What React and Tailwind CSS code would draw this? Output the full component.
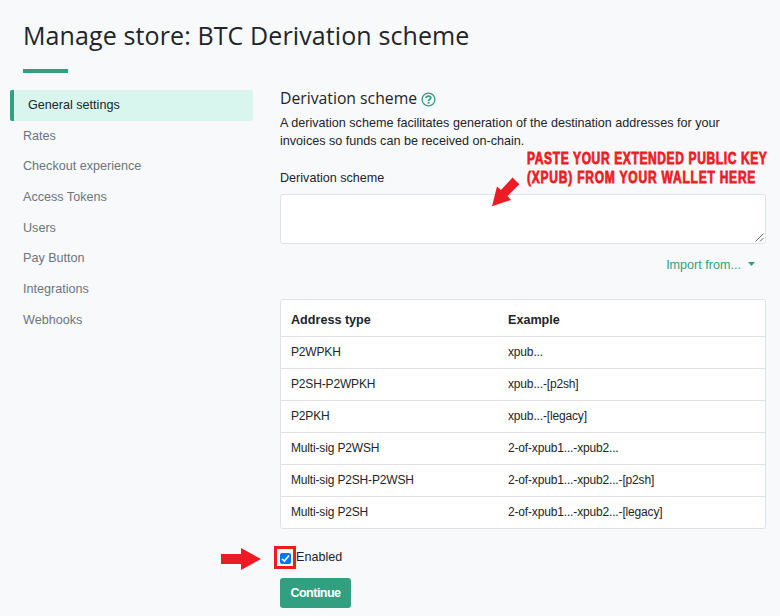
const navItems = [
  'Rates',
  'Checkout experience',
  'Access Tokens',
  'Users',
  'Pay Button',
  'Integrations',
  'Webhooks',
];

const addressTypes = [
  ['P2WPKH', 'xpub...'],
  ['P2SH-P2WPKH', 'xpub...-[p2sh]'],
  ['P2PKH', 'xpub...-[legacy]'],
  ['Multi-sig P2WSH', '2-of-xpub1...-xpub2...'],
  ['Multi-sig P2SH-P2WSH', '2-of-xpub1...-xpub2...-[p2sh]'],
  ['Multi-sig P2SH', '2-of-xpub1...-xpub2...-[legacy]'],
];

function Sidebar() {
  return (
    <nav className="flex w-[243px] shrink-0 flex-col text-[12.6px] text-[#6c757d]">
      <a className="flex h-[31px] items-center rounded-[2px] border-l-4 border-[#329f80] bg-[#d9f6ee] pb-px pl-[14px] text-[#212529]">
        General settings
      </a>
      {navItems.map((label) => (
        <a key={label} className="flex h-[30.65px] items-center pb-[0.4px] pl-[13px]">
          {label}
        </a>
      ))}
    </nav>
  );
}

function HelpIcon() {
  return (
    <svg className="ml-1 h-[15px] w-[15px]" viewBox="0 0 15 15" fill="none" stroke="#329f80">
      <circle cx="7.5" cy="7.5" r="6.4" strokeWidth="1.3" />
      <path d="M5.1 6C5.2 4.6 6.1 4.1 7.5 4.1S9.8 4.8 9.8 5.8C9.8 7.2 7.6 7.1 7.6 8.9" strokeWidth="1.8" />
      <path d="M7.6 9.8v1.8" strokeWidth="2" />
    </svg>
  );
}

function AddressTable() {
  return (
    <div className="mt-[26px] overflow-hidden rounded-[3px] border border-[#dee2e6] bg-white text-[12px] tracking-[-0.16px]">
      <div className="grid h-9 grid-cols-[217px_1fr] items-center pl-[10px] pt-[4px] text-[12.6px] font-bold tracking-normal">
        <span>Address type</span>
        <span>Example</span>
      </div>
      {addressTypes.map(([type, example]) => (
        <div key={type} className="grid h-8 grid-cols-[217px_1fr] items-center border-t border-[#dee2e6] pb-px pl-[10px]">
          <span>{type}</span>
          <span>{example}</span>
        </div>
      ))}
    </div>
  );
}

export default function App() {
  return (
    <div className="relative h-[616px] w-[780px] overflow-hidden bg-[#f8f9fb] font-['Liberation_Sans',Arial,sans-serif] text-[12.6px] text-[#212529]">
      <header className="flex flex-col pl-[23px] pt-[18px]">
        <h1 className="h-[35px] whitespace-nowrap font-['Open_Sans',sans-serif] text-[25px] leading-[35px] tracking-[0.11px]">
          Manage store: BTC Derivation scheme
        </h1>
        <div className="mt-4 h-1 w-[45px] bg-[#329f80]" />
      </header>

      <div className="flex gap-[27px] pl-[10px] pt-[17px]">
        <Sidebar />
        <main className="flex w-[486px] flex-col">
          <h2 className="flex h-[19px] items-center whitespace-nowrap font-['Open_Sans',sans-serif] text-[15.75px]">
            <span className="-mt-px w-[137px]">Derivation scheme</span>
            <HelpIcon />
          </h2>
          <p className="mt-[5px] whitespace-nowrap leading-[18px]">
            A derivation scheme facilitates generation of the destination addresses for your
            <br />
            invoices so funds can be received on-chain.
          </p>
          <label className="mt-[18px] leading-[20px]">Derivation scheme</label>
          <div className="mt-[6px] flex h-[50px] items-end justify-end rounded-[3px] border border-[#dee2e6] bg-white p-px">
            <svg className="h-[9px] w-[9px]" viewBox="0 0 9 9" stroke="#555" strokeWidth="0.9">
              <path d="M0.5 8.5L8.500 0.500M5 8.500L8.500 5" />
            </svg>
          </div>
          <div className="mt-[12px] flex h-[17px] items-center justify-end pr-[11px] text-[#329f80]">
            <span className="pt-px">Import from...</span>
            <svg className="ml-[7px] h-[4px] w-[7px] -translate-y-px" viewBox="0 0 7 4" fill="#329f80">
              <path d="M0 0h7L3.5 4z" />
            </svg>
          </div>
          <AddressTable />
          <div className="mt-[18px] flex h-5 items-center">
            <span className="mt-[2px] flex h-[11px] w-[11px] items-center justify-center rounded-[2px] bg-[#0075ff]">
              <svg className="h-[9px] w-[9px]" viewBox="0 0 9 9" fill="none" stroke="#fff" strokeWidth="1.6">
                <path d="M1 4.8L3.4 7L8 1.5" />
              </svg>
            </span>
            <span className="ml-[5px]">Enabled</span>
          </div>
          <button className="mt-[11px] h-[30px] w-[71px] rounded-[3px] bg-[#329f80] text-[12.6px] font-bold tracking-[-0.55px] text-white">
            Continue
          </button>
        </main>
      </div>

      <div className="absolute left-[527px] top-[149px] origin-left scale-x-[0.75] whitespace-nowrap text-[16px] font-bold leading-[19px] text-[#ed1c24] [-webkit-text-stroke:0.8px_#ed1c24]">
        <span className="tracking-[0.84px]">PASTE YOUR EXTENDED PUBLIC KEY</span>
        <br />
        <span className="tracking-[1.05px]">(XPUB) FROM YOUR WALLET HERE</span>
      </div>
      <svg className="absolute left-[490px] top-[176px] h-[32px] w-[32px]" viewBox="490 176 32 32" fill="#ed1c24">
        <path d="M492 206.300L497 186.500L501 190L512.500 177.500L519.300 184.200L507.500 196L511 200Z" />
      </svg>
      <svg className="absolute left-[220px] top-[546px] h-[26px] w-[42px]" viewBox="220 546 42 26" fill="#ed1c24">
        <path d="M221 554h20v-6l20 11l-20 11v-6h-20z" />
      </svg>
      <div className="absolute left-[274px] top-[546px] h-[23px] w-[22px] border-[3px] border-[#ed1c24]" />
    </div>
  );
}
